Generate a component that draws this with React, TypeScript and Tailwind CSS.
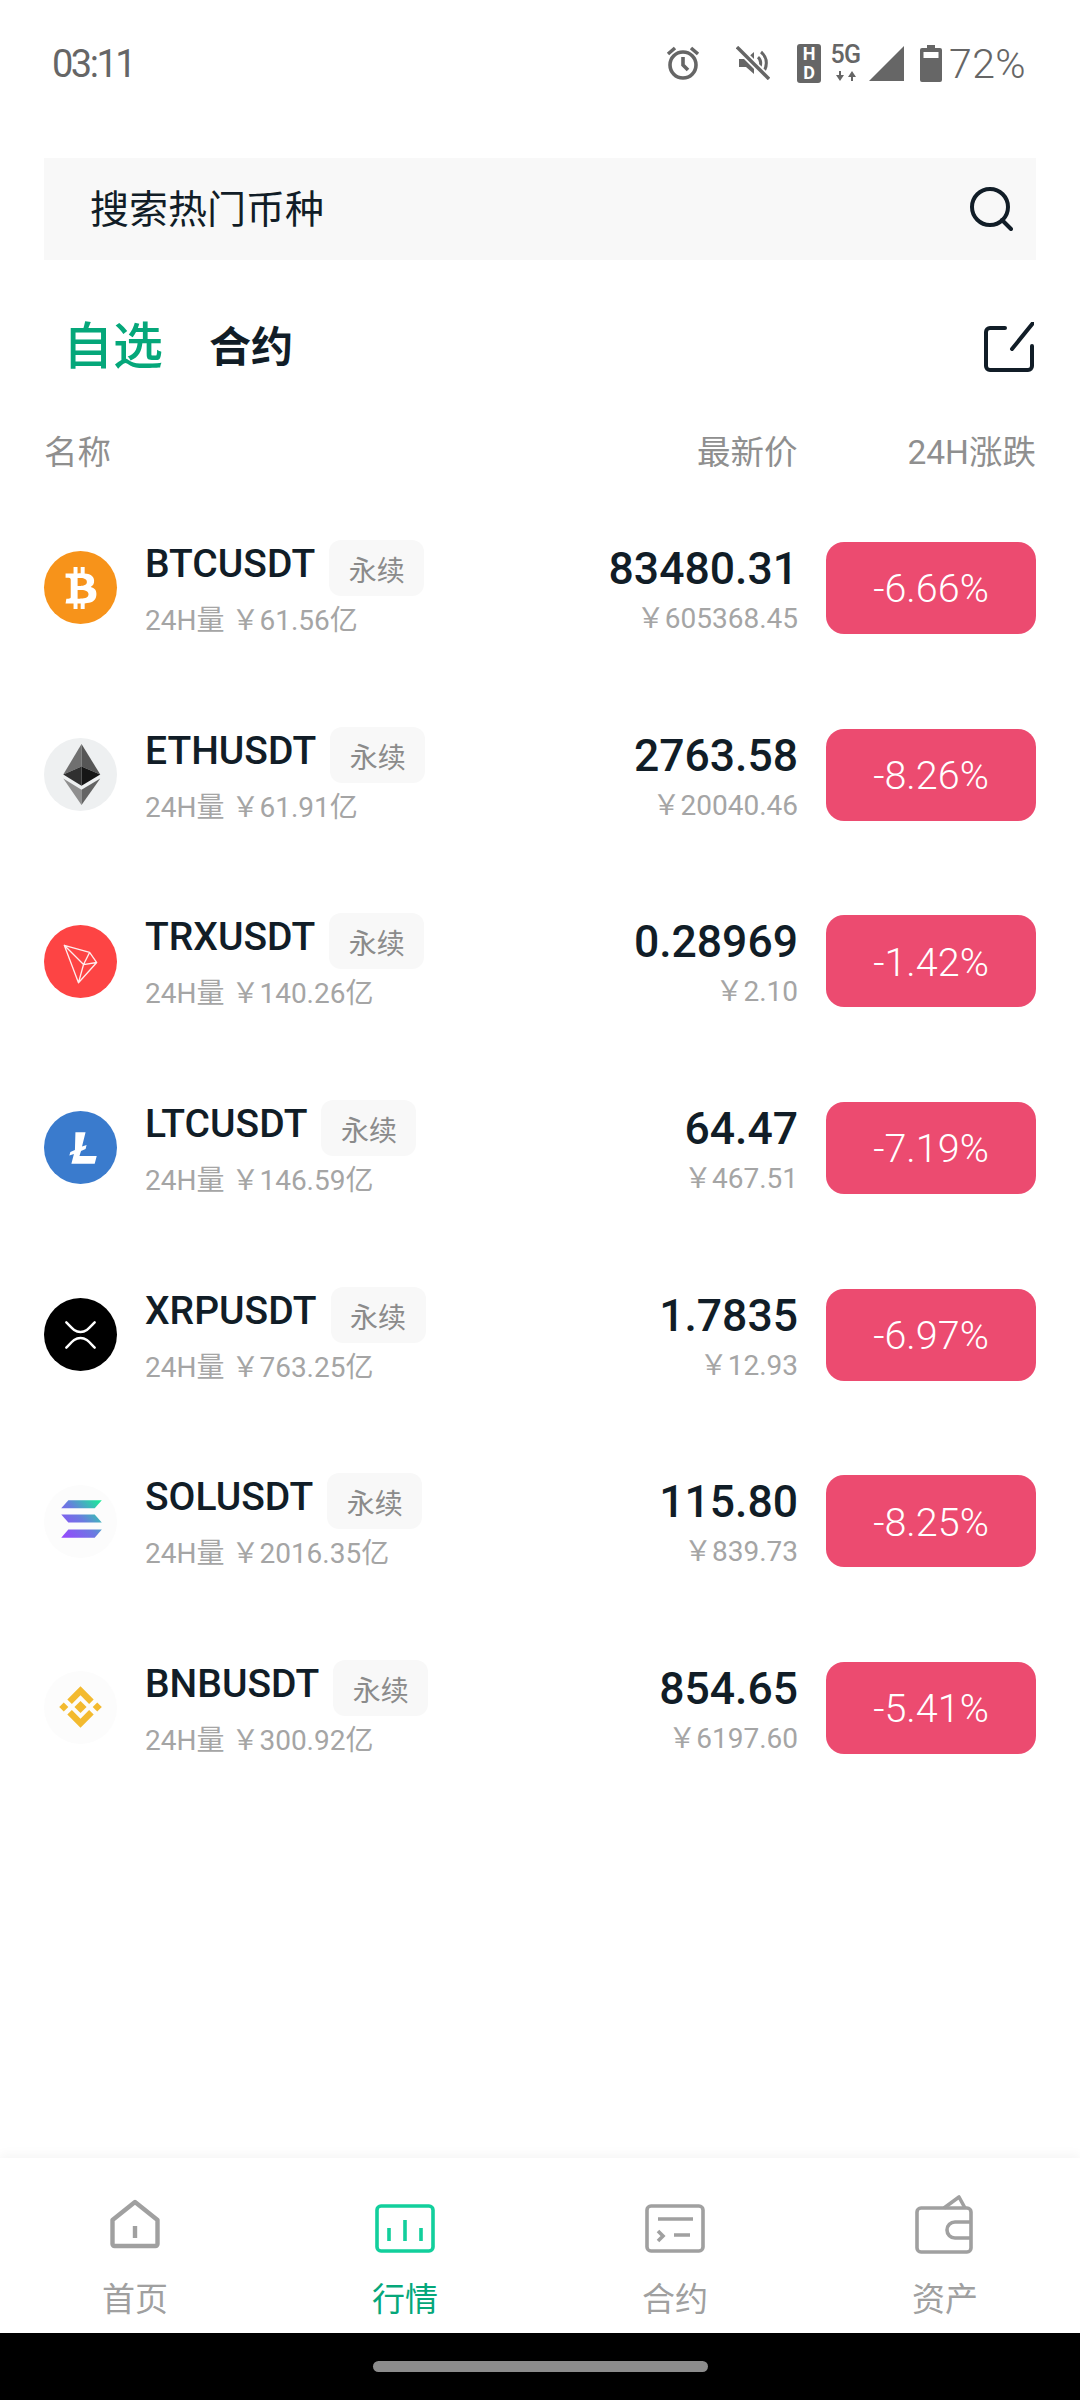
import React from "react";
import { FaBtc } from "react-icons/fa";

interface Coin {
  name: string;
  volume: string;
  price: string;
  cny: string;
  change: string;
  icon: React.ReactNode;
}

const BtcIcon = () => (
  <div className="w-[73px] h-[73px] rounded-full bg-[#f7931a] flex items-center justify-center">
    <FaBtc className="w-[34px] h-[42px] text-white" />
  </div>
);

const EthIcon = () => (
  <svg className="w-[73px] h-[73px]" viewBox="0 0 72 72">
    <circle cx="36" cy="36" r="36" fill="#eef0f1" />
    <polygon points="37,6 19,36 37,28" fill="#707070" />
    <polygon points="37,6 55.5,36 37,28" fill="#565656" />
    <polygon points="19,36 37,28 37,47" fill="#303030" />
    <polygon points="55.5,36 37,28 37,47" fill="#161616" />
    <polygon points="19,40 37,51 37,66" fill="#8f8f8f" />
    <polygon points="55.5,40 37,51 37,66" fill="#646464" />
  </svg>
);

const TrxIcon = () => (
  <svg className="w-[73px] h-[73px]" viewBox="0 0 72 72">
    <circle cx="36" cy="36" r="36" fill="#fd4444" />
    <path d="M20 20 45 27 52 37 34 57ZM20 20 39 39 52 37M39 39 34 57M45 27 39 39" fill="none" stroke="#ffffff" strokeWidth="1.3" strokeLinejoin="round" opacity="0.9" />
  </svg>
);

const LtcIcon = () => (
  <svg className="w-[73px] h-[73px]" viewBox="0 0 72 72">
    <circle cx="36" cy="36" r="36" fill="#3a7bcd" />
    <polygon points="31,21 41,21 37.5,35 42,33.5 41,37.5 36.5,39.5 35,44.5 52,44.5 50,52 27,52 29.5,42.5 25,44 26,40.5 30.5,38.5" fill="#ffffff" />
  </svg>
);

const XrpIcon = () => (
  <svg className="w-[73px] h-[73px]" viewBox="0 0 72 72">
    <circle cx="36" cy="36" r="36" fill="#000000" />
    <path d="M22 24C27 29 30 33.5 36 33.5C42 33.5 45 29 50 24M22 49C27 44 30 39.5 36 39.5C42 39.5 45 44 50 49" fill="none" stroke="#ffffff" strokeWidth="2.4" strokeLinecap="round" />
  </svg>
);

const SolIcon = () => (
  <svg className="w-[73px] h-[73px]" viewBox="0 0 72 72">
    <defs>
      <linearGradient id="sol" x1="17" y1="52" x2="57" y2="15" gradientUnits="userSpaceOnUse">
        <stop offset="0" stopColor="#9945ff" />
        <stop offset="0.5" stopColor="#6a7be0" />
        <stop offset="1" stopColor="#14f195" />
      </linearGradient>
    </defs>
    <circle cx="36" cy="36" r="36" fill="#fcfcfc" />
    <polygon points="24,15 57,15 50,23 17,23" fill="url(#sol)" />
    <polygon points="17,29 50,29 57,37 24,37" fill="url(#sol)" />
    <polygon points="24,44 57,44 50,52 17,52" fill="url(#sol)" />
  </svg>
);

const BnbIcon = () => (
  <svg className="w-[73px] h-[73px]" viewBox="0 0 72 72">
    <circle cx="36" cy="36" r="36" fill="#fcfcfc" />
    <g fill="#f3ba2f">
      <polygon points="36,15 49,28 44.5,32.5 36,24 27.5,32.5 23,28" />
      <polygon points="36,56 49,43 44.5,38.5 36,47 27.5,38.5 23,43" />
      <polygon points="15,35.5 19.5,31 24,35.5 19.5,40" />
      <polygon points="48,35.5 52.5,31 57,35.5 52.5,40" />
      <polygon points="36,29.5 42,35.5 36,41.5 30,35.5" />
    </g>
  </svg>
);

const coins: Coin[] = [
  { name: "BTCUSDT", volume: "61.56", price: "83480.31", cny: "605368.45", change: "-6.66%", icon: <BtcIcon /> },
  { name: "ETHUSDT", volume: "61.91", price: "2763.58", cny: "20040.46", change: "-8.26%", icon: <EthIcon /> },
  { name: "TRXUSDT", volume: "140.26", price: "0.28969", cny: "2.10", change: "-1.42%", icon: <TrxIcon /> },
  { name: "LTCUSDT", volume: "146.59", price: "64.47", cny: "467.51", change: "-7.19%", icon: <LtcIcon /> },
  { name: "XRPUSDT", volume: "763.25", price: "1.7835", cny: "12.93", change: "-6.97%", icon: <XrpIcon /> },
  { name: "SOLUSDT", volume: "2016.35", price: "115.80", cny: "839.73", change: "-8.25%", icon: <SolIcon /> },
  { name: "BNBUSDT", volume: "300.92", price: "854.65", cny: "6197.60", change: "-5.41%", icon: <BnbIcon /> },
];

const StatusBar = () => (
  <div className="h-[126px] flex items-center pl-[52px] pr-[54px] text-[#666666]">
    <span className="pt-[3px] text-[38px] font-normal tracking-[-2.5px]">03:11</span>
    <div className="ml-auto flex items-center">
      <svg className="mb-[3px]" width="34" height="36" viewBox="0 0 34 36" fill="none" stroke="#666666" strokeWidth="3.6">
        <circle cx="17" cy="21" r="13" />
        <path d="M17 13v8l5 5M2 10l7-6M32 10l-7-6" />
      </svg>
      <svg className="ml-[36px]" width="34" height="34" viewBox="0 0 34 34" fill="none">
        <polygon points="3,13 10,13 18,6 18,28 10,21 3,21" fill="#666666" />
        <path d="M22 11a8 8 0 0 1 0 12M25 6a14 14 0 0 1 0 22" stroke="#666666" strokeWidth="3" />
        <path d="M2 2l30 30" stroke="#ffffff" strokeWidth="7" />
        <path d="M1 1l32 32" stroke="#666666" strokeWidth="3.4" />
      </svg>
      <div className="ml-[27px] w-[24px] h-[39px] rounded-[3px] bg-[#666666] flex flex-col items-center justify-center text-white text-[18px] font-bold leading-[19px]">
        <span>H</span>
        <span>D</span>
      </div>
      <div className="ml-[9px] w-[31px] h-[38px] flex flex-col items-center">
        <span className="text-[25px] font-medium leading-[22px] tracking-[-0.5px]">5G</span>
        <svg className="mt-[5px]" width="22" height="10" viewBox="0 0 22 10" fill="#666666">
          <polygon points="1,4 4,4 4,0 6,0 6,4 9,4 5,10" />
          <polygon points="13,6 16,6 16,10 18,10 18,6 21,6 17,0" />
        </svg>
      </div>
      <svg className="ml-[8px]" width="35" height="35" viewBox="0 0 35 35" fill="#666666">
        <polygon points="35,0 35,35 0,35" />
      </svg>
      <svg className="ml-[16px]" width="22" height="37" viewBox="0 0 22 37" fill="#666666">
        <path d="M7 0h8v3h5a2 2 0 0 1 2 2v30a2 2 0 0 1-2 2H2a2 2 0 0 1-2-2V5a2 2 0 0 1 2-2h5Z" />
        <rect x="3.5" y="7" width="15" height="6" fill="#ffffff" />
      </svg>
      <span className="ml-[7px] pt-[2px] text-[41px] tracking-[0.4px] font-light leading-none">72%</span>
    </div>
  </div>
);

const SearchBar = () => (
  <div className="mt-[32px] mx-[44px] h-[102px] bg-[#f8f8f8] flex items-center justify-between pl-[46px] pr-[23px]">
    <span className="pt-[2px] text-[39px] text-[#111d27]">搜索热门币种</span>
    <svg width="44" height="44" viewBox="0 0 44 44" fill="none" stroke="#111d27" strokeWidth="4">
      <circle cx="21" cy="20" r="18" />
      <path d="M33 33l9 9" strokeLinecap="round" />
    </svg>
  </div>
);

const Tabs = () => (
  <div className="mt-[34px] h-[106px] flex items-center pl-[63px] pr-[46px]">
    <span className="text-[50px] font-medium text-[#05a77a]">自选</span>
    <span className="ml-[46px] text-[42px] font-bold text-[#111d27]">合约</span>
    <svg className="ml-auto" width="50" height="50" viewBox="0 0 50 50" fill="none" stroke="#111d27" strokeWidth="4" strokeLinecap="round">
      <path d="M21 6H6a4 4 0 0 0-4 4v34a4 4 0 0 0 4 4h38a4 4 0 0 0 4-4V24" />
      <path d="M49 1 28 27" />
    </svg>
  </div>
);

const TableHeader = () => (
  <div className="h-[94.67px] pt-[12px] px-[44px] flex items-center text-[33.5px] text-[#8f8f8f]">
    <span>名称</span>
    <span className="ml-auto">最新价</span>
    <span className="ml-[110px]">24H涨跌</span>
  </div>
);

const CoinRow = ({ coin }: { coin: Coin }) => (
  <div className="h-[186.67px] px-[44px] flex items-center">
    <div className="shrink-0 w-[73px] h-[73px]">{coin.icon}</div>
    <div className="ml-[28px] h-[96px]">
      <div className="h-[56px] flex items-start">
        <span className="pt-[1px] text-[39px] font-medium leading-[46px] text-[#111d27]">{coin.name}</span>
        <span className="ml-[14px] w-[95px] h-[56px] pt-[8px] rounded-[12px] bg-[#f8f8f8] flex items-center justify-center text-[28px] text-[#8b8b8b]">永续</span>
      </div>
      <div className="mt-[9px] text-[28px] leading-[32px] text-[#a5a5a5]">24H量 ￥{coin.volume}亿</div>
    </div>
    <div className="ml-auto text-right">
      <div className="text-[44.5px] font-medium leading-[56px] text-[#111d27]">{coin.price}</div>
      <div className="mt-[6px] text-[28px] leading-[32px] text-[#a5a5a5]">￥{coin.cny}</div>
    </div>
    <div className="ml-[28px] w-[210px] h-[92px] pt-[2px] rounded-[18px] bg-[#ec4b70] flex items-center justify-center text-[39.5px] font-light text-white">
      {coin.change}
    </div>
  </div>
);

const HomeIcon = () => (
  <svg width="60" height="60" viewBox="0 0 60 60" fill="none" stroke="#a0a0a0" strokeWidth="4.4" strokeLinejoin="round">
    <path d="M30 8 L52.5 26 V50 a2 2 0 0 1-2 2 H9.5 a2 2 0 0 1-2-2 V26 Z" />
    <path d="M30 32v12" />
  </svg>
);

const ChartIcon = () => (
  <svg width="60" height="60" viewBox="0 0 60 60" fill="none" stroke="#12cf9c" strokeWidth="3.6">
    <rect x="2" y="12" width="56" height="45" rx="4" />
    <path d="M14 34v13M30 26v21M46 34v13" />
  </svg>
);

const ContractIcon = () => (
  <svg width="60" height="60" viewBox="0 0 60 60" fill="none" stroke="#a0a0a0" strokeWidth="3.6">
    <rect x="2" y="12" width="56" height="45" rx="4" />
    <path d="M13 25h35M13 37l5 5-5 5M29 41h16" />
  </svg>
);

const WalletIcon = () => (
  <svg width="60" height="60" viewBox="0 0 60 60" fill="none" stroke="#a0a0a0" strokeWidth="3.6" strokeLinejoin="round">
    <path d="M6 14h46a4 4 0 0 1 4 4v36a4 4 0 0 1-4 4H6a4 4 0 0 1-4-4V18a4 4 0 0 1 4-4Z" />
    <path d="M29 14 44 3l6 11" />
    <path d="M56 28H40a8 8 0 0 0 0 16h16" />
  </svg>
);

const navItems = [
  { label: "首页", icon: <HomeIcon />, active: false },
  { label: "行情", icon: <ChartIcon />, active: true },
  { label: "合约", icon: <ContractIcon />, active: false },
  { label: "资产", icon: <WalletIcon />, active: false },
];

const BottomNav = () => (
  <nav className="h-[175px] bg-white shadow-[0_-4px_10px_rgba(0,0,0,0.04)] grid grid-cols-4">
    {navItems.map((item) => (
      <div key={item.label} className="flex flex-col items-center pt-[36px]">
        {item.icon}
        <span className={item.active ? "mt-[22px] text-[33px] leading-[48px] text-[#05a77a]" : "mt-[22px] text-[33px] leading-[48px] text-[#a0a0a0]"}>
          {item.label}
        </span>
      </div>
    ))}
  </nav>
);

export default function App() {
  return (
    <div className="w-[1080px] h-[2400px] bg-white flex flex-col overflow-hidden font-[Roboto,'Noto_Sans_CJK_SC',sans-serif]">
      <main className="flex-1">
        <StatusBar />
        <SearchBar />
        <Tabs />
        <TableHeader />
        {coins.map((coin) => (
          <CoinRow key={coin.name} coin={coin} />
        ))}
      </main>
      <BottomNav />
      <div className="h-[67px] bg-black flex justify-center pt-[28px]">
        <div className="w-[335px] h-[11px] rounded-full bg-[#8c8c8c]" />
      </div>
    </div>
  );
}
